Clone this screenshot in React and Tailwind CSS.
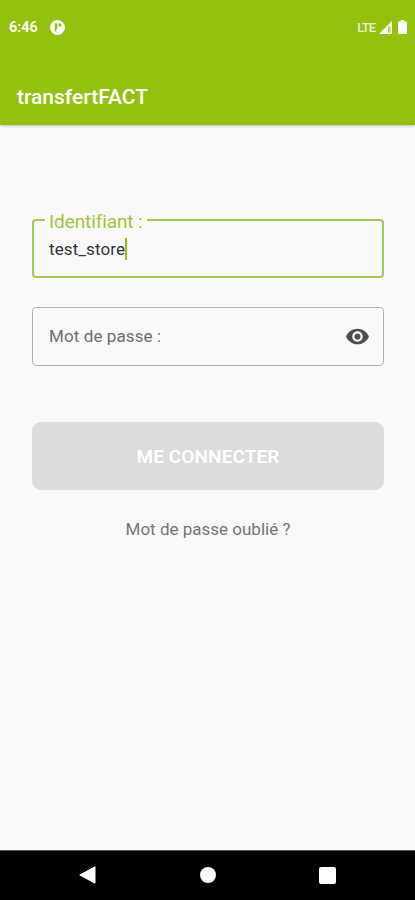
import { useState } from "react";

// Barra de estado: hora, notificación, señal y batería
const StatusBar = () => (
  <div className="h-[54px] flex items-center justify-between pl-[9px] pr-[8px] text-white">
    <div className="flex items-center gap-[12px]">
      <span className="text-[14.5px] leading-none font-semibold pt-[2px]">6:46</span>
      <svg className="w-[15px] h-[15px]" viewBox="0 0 15 15">
        <circle cx="7.5" cy="7.5" r="7.4" fill="#fff" />
        <path d="M4.800 3.200h2.600v5.600h-1v2.800H4.800z" fill="#95c00f" />
        <path d="M8.600 3.400h1.600a1.500 1.500 0 0 1 0 3H8.600z" fill="#95c00f" />
      </svg>
    </div>
    <div className="flex items-center">
      <span className="text-[13px] leading-none font-medium tracking-[-1px] text-[#eaf4cc] mr-[4px]">LTE</span>
      <svg className="w-[13px] h-[13px] mr-[6px]" viewBox="0 0 13 13">
        <path d="M13 0v13H0z" fill="#fff" />
        <path d="M9 5.500h2.500v6H9z" fill="#95c00f" />
        <path d="M9.800 5.500h.9v6h-.9z" fill="#d5e6a0" />
      </svg>
      <svg className="w-[9px] h-[14px]" viewBox="0 0 9 14">
        <path d="M2.700 0h3.600v1.500H8a1 1 0 0 1 1 1V13a1 1 0 0 1-1 1H1a1 1 0 0 1-1-1V2.500a1 1 0 0 1 1-1h1.700z" fill="#fff" />
      </svg>
    </div>
  </div>
);

// Barra de navegación del sistema
const SystemNav = () => (
  <nav className="h-[50px] shrink-0 bg-black border-t border-[#555] grid grid-cols-[87px_120px_120px_1fr] items-center pb-[1px]">
    <button className="justify-self-end -mr-[9px]" aria-label="Retour">
      <svg className="w-[17px] h-[18px] block" viewBox="0 0 17 18">
        <path d="M16 .8v16.400L.8 9z" fill="#fff" stroke="#fff" strokeWidth="1" strokeLinejoin="round" />
      </svg>
    </button>
    <button className="justify-self-end -mr-[9px] w-4 h-4 rounded-full bg-white" aria-label="Accueil" />
    <div className="justify-self-end -mr-[9px] w-[17px] h-[17px] rounded-[2px] bg-white" aria-label="Applications" />
  </nav>
);

export default function App() {
  const [showPassword, setShowPassword] = useState(false);

  return (
    <div className="w-[415px] h-[900px] flex flex-col bg-[#fafafa] font-['Roboto',sans-serif] overflow-hidden">
      <header className="h-[125px] shrink-0 bg-[#95c00f] shadow-[0_1px_3px_rgba(0,0,0,0.25)]">
        <StatusBar />
        <h1 className="pl-[17px] pt-[28px] text-[21px] leading-[30px] font-medium text-white">transfertFACT</h1>
      </header>

      <main className="flex-1 flex flex-col pl-8 pr-[31px] pt-[94px]">
        {/* Identifiant */}
        <div className="relative h-[59px] border-2 border-[#a3ca52] rounded-[4px] flex items-center px-[15px]">
          <label className="absolute left-[11px] -top-[11px] pl-[4px] pr-[4px] bg-[#fafafa] text-[19px] leading-[24px] tracking-[-0.1px] text-[#a0c43c]">
            Identifiant :
          </label>
          <span className="text-[17px] leading-5 text-[#333] tracking-[0.1px]">test_store</span>
          <span className="w-[2px] h-[22px] bg-[#95c00f]" />
        </div>

        {/* Mot de passe */}
        <div className="mt-[29px] h-[59px] border border-[#b0b0b0] rounded-[4px] flex items-center justify-between pl-[16px] pr-[13px]">
          <span className="text-[17px] text-[#6c6c6c] tracking-[0.1px]">Mot de passe :</span>
          <button onClick={() => setShowPassword(!showPassword)} aria-label="Afficher le mot de passe">
            <svg className="w-[25px] h-[25px] block" viewBox="0 0 24 24">
              <path
                fill="#4d4d4d"
                d="M12 4.500C7 4.500 2.730 7.610 1 12c1.730 4.390 6 7.500 11 7.500s9.270-3.110 11-7.500c-1.730-4.390-6-7.500-11-7.500zM12 17c-2.760 0-5-2.240-5-5s2.240-5 5-5 5 2.240 5 5-2.240 5-5 5zm0-8c-1.660 0-3 1.340-3 3s1.340 3 3 3 3-1.340 3-3-1.340-3-3-3z"
              />
            </svg>
          </button>
        </div>

        <button className="mt-[56px] h-[68px] pt-[2px] rounded-[9px] bg-[#dcdcdc] text-white text-[19px] font-semibold tracking-[0.1px]">
          ME CONNECTER
        </button>

        <a className="mt-[27px] text-center text-[17px] leading-6 text-[#757575]">Mot de passe oublié ?</a>
      </main>

      <SystemNav />
    </div>
  );
}
